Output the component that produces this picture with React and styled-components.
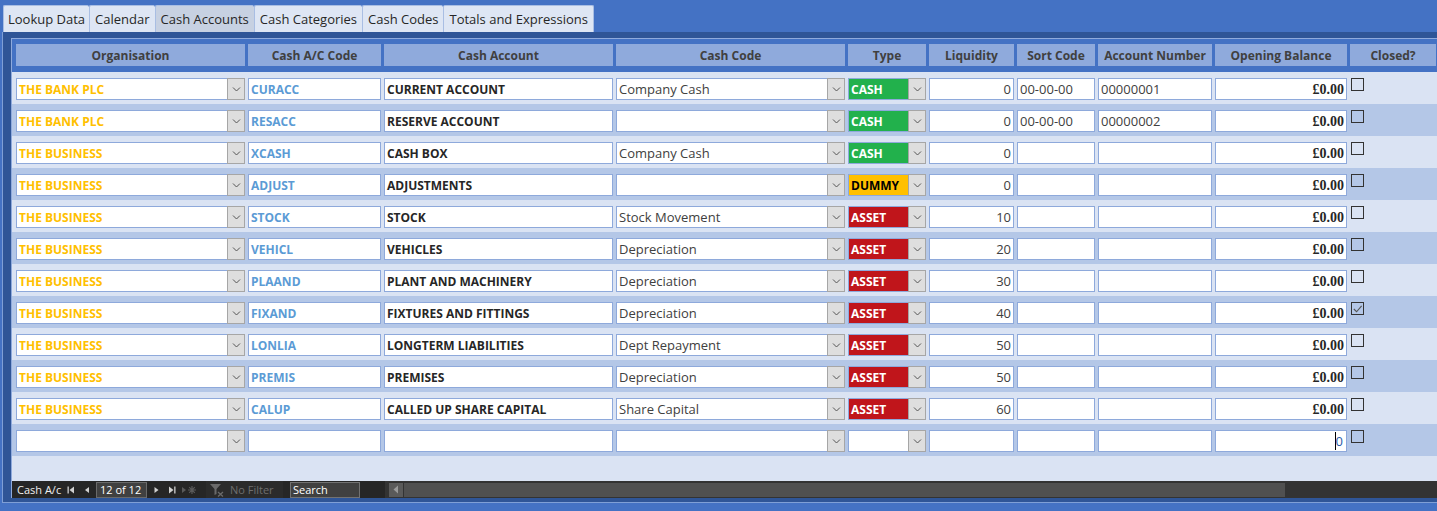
import React from "react"
import styled, { createGlobalStyle } from "styled-components"

const GlobalStyle = createGlobalStyle`
    html, body {
        margin: 0;
        padding: 0;
        background: #4472C4;
        overflow: hidden;
    }
    body {
        font-family: "Open Sans", "Liberation Sans", sans-serif;
    }
`

const COLS = "229px 133px 229px 229px 78px 85px 78px 114px 132px 86px"

const headers = [
    "Organisation", "Cash A/C Code", "Cash Account", "Cash Code", "Type",
    "Liquidity", "Sort Code", "Account Number", "Opening Balance", "Closed?",
]

const tabs = ["Lookup Data", "Calendar", "Cash Accounts", "Cash Categories", "Cash Codes", "Totals and Expressions"]

const rows = [
    { org: "THE BANK PLC", code: "CURACC", account: "CURRENT ACCOUNT", cashCode: "Company Cash", type: "CASH", liq: "0", sort: "00-00-00", num: "00000001" },
    { org: "THE BANK PLC", code: "RESACC", account: "RESERVE ACCOUNT", cashCode: "", type: "CASH", liq: "0", sort: "00-00-00", num: "00000002" },
    { org: "THE BUSINESS", code: "XCASH", account: "CASH BOX", cashCode: "Company Cash", type: "CASH", liq: "0" },
    { org: "THE BUSINESS", code: "ADJUST", account: "ADJUSTMENTS", cashCode: "", type: "DUMMY", liq: "0" },
    { org: "THE BUSINESS", code: "STOCK", account: "STOCK", cashCode: "Stock Movement", type: "ASSET", liq: "10" },
    { org: "THE BUSINESS", code: "VEHICL", account: "VEHICLES", cashCode: "Depreciation", type: "ASSET", liq: "20" },
    { org: "THE BUSINESS", code: "PLAAND", account: "PLANT AND MACHINERY", cashCode: "Depreciation", type: "ASSET", liq: "30" },
    { org: "THE BUSINESS", code: "FIXAND", account: "FIXTURES AND FITTINGS", cashCode: "Depreciation", type: "ASSET", liq: "40", closed: true },
    { org: "THE BUSINESS", code: "LONLIA", account: "LONGTERM LIABILITIES", cashCode: "Dept Repayment", type: "ASSET", liq: "50" },
    { org: "THE BUSINESS", code: "PREMIS", account: "PREMISES", cashCode: "Depreciation", type: "ASSET", liq: "50" },
    { org: "THE BUSINESS", code: "CALUP", account: "CALLED UP SHARE CAPITAL", cashCode: "Share Capital", type: "ASSET", liq: "60" },
]

const typeColours = {
    CASH: { bg: "#22B14C", fg: "#ffffff" },
    DUMMY: { bg: "#FFC000", fg: "#000000" },
    ASSET: { bg: "#C0151B", fg: "#ffffff" },
}

const Chevron = () => (
    <svg width="9" height="5" viewBox="0 0 9 5">
        <path d="M1 0.5 L4.5 4 L8 0.5" fill="none" stroke="#555" strokeWidth="1" />
    </svg>
)

const Combo = ({ children, tone }) => (
    <ComboBox>
        <ComboText tone={tone}>{children}</ComboText>
        <DropButton><Chevron /></DropButton>
    </ComboBox>
)

const TypeCombo = ({ type }) => {
    const c = typeColours[type]
    return (
        <ComboBox>
            <TypeFill style={c ? { background: c.bg, color: c.fg } : undefined}>{type}</TypeFill>
            <DropButton><Chevron /></DropButton>
        </ComboBox>
    )
}

const Check = ({ checked }) => (
    <CheckBox>
        {checked && (
            <svg width="12" height="12" viewBox="0 0 12 12">
                <path d="M2 6 L5 9 L10.5 2.5" fill="none" stroke="#555" strokeWidth="1.2" />
            </svg>
        )}
    </CheckBox>
)

const Icon = ({ d, fill = "#d0d0d0" }) => (
    <svg width="10" height="10" viewBox="0 0 10 10">
        <path d={d} fill={fill} />
    </svg>
)

export default function App() {
    return (
        <>
            <GlobalStyle />
            <TabStrip>
                {tabs.map((t) => (
                    <Tab key={t} active={t === "Cash Accounts"}>{t}</Tab>
                ))}
            </TabStrip>
            <Panel>
                <Inner>
                    <HeaderBar>
                        {headers.map((h) => (
                            <HeaderCell key={h}>{h}</HeaderCell>
                        ))}
                    </HeaderBar>
                    <Detail>
                        {rows.map((r, i) => (
                            <Row key={r.code} alt={i % 2 === 1}>
                                <Combo tone="org">{r.org}</Combo>
                                <Field tone="code">{r.code}</Field>
                                <Field tone="bold">{r.account}</Field>
                                <Combo>{r.cashCode}</Combo>
                                <TypeCombo type={r.type} />
                                <Field align="right">{r.liq}</Field>
                                <Field>{r.sort}</Field>
                                <Field>{r.num}</Field>
                                <Field align="right" tone="money">£0.00</Field>
                                <Check checked={r.closed} />
                            </Row>
                        ))}
                        <Row alt>
                            <Combo />
                            <Field />
                            <Field />
                            <Combo />
                            <TypeCombo />
                            <Field />
                            <Field />
                            <Field />
                            <Field align="right"><Caret>0</Caret></Field>
                            <Check />
                        </Row>
                    </Detail>
                    <NavBar>
                        <NavLabel>Cash A/c</NavLabel>
                        <NavBtn><Icon d="M1.5 1.5 H2.8 V8.5 H1.5 Z M8 1.5 V8.5 L3.5 5 Z" /></NavBtn>
                        <NavBtn><Icon d="M7 2 V8 L3 5 Z" /></NavBtn>
                        <RecordBox>12 of 12</RecordBox>
                        <NavBtn><Icon d="M3.5 2 V8 L7.5 5 Z" /></NavBtn>
                        <NavBtn><Icon d="M2 1.5 V8.5 L6.5 5 Z M7.2 1.5 H8.5 V8.5 H7.2 Z" /></NavBtn>
                        <NavBtn wide>
                            <svg width="16" height="10" viewBox="0 0 16 10">
                                <path d="M1 2 V8 L5 5 Z" fill="#5a5a5a" />
                                <path d="M11 1 V9 M7 5 H15 M8.2 2.2 L13.8 7.8 M13.8 2.2 L8.2 7.8" stroke="#5a5a5a" strokeWidth="1.2" />
                            </svg>
                        </NavBtn>
                        <FilterBox>
                            <svg width="16" height="14" viewBox="0 0 16 14">
                                <path d="M1 1 H12 L7.5 6 V11 L5.5 12 V6 Z" fill="#6a6a6a" />
                                <path d="M9 9 L14 13.5 M14 9 L9 13.5" stroke="#6a6a6a" strokeWidth="1.3" />
                            </svg>
                            <span>No Filter</span>
                        </FilterBox>
                        <SearchBox>Search</SearchBox>
                        <ScrollBar>
                            <ScrollArrow>
                                <svg width="6" height="9" viewBox="0 0 6 9">
                                    <path d="M5 0.5 V8.5 L0.5 4.5 Z" fill="#9a9a9a" />
                                </svg>
                            </ScrollArrow>
                            <ScrollThumb />
                        </ScrollBar>
                    </NavBar>
                </Inner>
            </Panel>
        </>
    )
}

const TabStrip = styled.div`
    display: flex;
    padding: 5px 0 0 3px;
    height: 27px;
`

const Tab = styled.div`
    box-sizing: border-box;
    height: 27px;
    padding: 0 5px 0 5px;
    display: flex;
    align-items: center;
    font-size: 13px;
    color: #262626;
    background: ${(p) => (p.active ? "#C7D1E2" : "#DEE6F4")};
    border: 1px solid #A9BEE3;
    border-bottom: none;
    border-right: none;
    border-radius: 2px 2px 0 0;
    &:first-child {
        padding-left: 4px;
        padding-right: 4px;
    }
    &:last-child {
        border-right: 1px solid #A9BEE3;
    }
`

const Panel = styled.div`
    margin-left: 2px;
    background: #2F5597;
    border-left: 1px solid #7F9FD6;
    border-bottom: 1px solid #7F9FD6;
    padding: 6px 0 4px 8px;
`

const Inner = styled.div`
    border-left: 1px solid #8FAADC;
    border-top: 1px solid #8FAADC;
    background: #DAE3F3;
`

const HeaderBar = styled.div`
    display: grid;
    grid-template-columns: ${COLS};
    column-gap: 3px;
    background: #4472C4;
    padding: 5px 0 6px 4px;
`

const HeaderCell = styled.div`
    height: 22px;
    background: #8FAADC;
    display: flex;
    align-items: center;
    justify-content: center;
    font-size: 12px;
    font-weight: 700;
    color: #404040;
    white-space: nowrap;
    overflow: hidden;
`

const Detail = styled.div`
    height: 409px;
    background: #DAE3F3;
`

const Row = styled.div`
    display: grid;
    grid-template-columns: ${COLS};
    column-gap: 3px;
    align-items: start;
    height: 32px;
    box-sizing: border-box;
    padding: 6px 0 0 4px;
    background: ${(p) => (p.alt ? "#B4C7E7" : "#DAE3F3")};
`

const toneStyles = {
    org: "color: #FFC000; font-weight: 700; font-size: 12px; line-height: 22px;",
    code: "color: #5B9BD5; font-weight: 700; font-size: 12px; line-height: 22px;",
    bold: "color: #262626; font-weight: 700; font-size: 12px; line-height: 22px;",
    money: "color: #262626; font-weight: 700; font-size: 14px; line-height: 22px; font-family: 'Liberation Serif', serif;",
}

const Field = styled.div`
    box-sizing: border-box;
    height: 22px;
    background: #ffffff;
    border: 1px solid #8EA9DB;
    padding: 0 2px;
    line-height: 20px;
    font-size: 13px;
    color: #404040;
    white-space: nowrap;
    overflow: hidden;
    text-align: ${(p) => p.align || "left"};
    ${(p) => toneStyles[p.tone] || ""}
`

const ComboBox = styled.div`
    box-sizing: border-box;
    height: 22px;
    background: #ffffff;
    border: 1px solid #8EA9DB;
    display: flex;
    overflow: visible;
`

const ComboText = styled.div`
    flex: 1;
    padding: 0 2px;
    line-height: 20px;
    height: 20px;
    font-size: 13px;
    color: #404040;
    white-space: nowrap;
    overflow: hidden;
    ${(p) => toneStyles[p.tone] || ""}
`

const TypeFill = styled.div`
    flex: 1;
    padding: 0 2px;
    line-height: 21px;
    height: 20px;
    font-size: 12px;
    font-weight: 700;
    white-space: nowrap;
    overflow: hidden;
`

const DropButton = styled.div`
    box-sizing: border-box;
    width: 18px;
    margin: -1px -1px -1px 0;
    background: #DEDEDE;
    border: 1px solid #A6A6A6;
    display: flex;
    align-items: center;
    justify-content: center;
`

const CheckBox = styled.div`
    box-sizing: border-box;
    width: 13px;
    height: 13px;
    margin: 0 0 0 1px;
    border: 1px solid #333333;
    display: flex;
    align-items: center;
    justify-content: center;
    svg {
        display: block;
    }
`

const Caret = styled.span`
    display: inline-block;
    border-left: 1px solid #000;
    line-height: 18px;
    margin-top: 1px;
    padding-right: 1px;
    color: #2A5CAA;
    font-size: 13px;
`

const NavBar = styled.div`
    display: flex;
    align-items: center;
    height: 17px;
    background: #262626;
    color: #f0f0f0;
    font-size: 11px;
    padding-left: 5px;
    overflow: hidden;
`

const NavLabel = styled.div`
    width: 46px;
    white-space: nowrap;
`

const NavBtn = styled.div`
    width: ${(p) => (p.wide ? "18px" : "16px")};
    height: 17px;
    display: flex;
    align-items: center;
    justify-content: center;
`

const RecordBox = styled.div`
    box-sizing: border-box;
    width: 51px;
    height: 16px;
    margin: 0 1px 0 1px;
    padding-left: 3px;
    background: #404040;
    border: 1px solid #6a6a6a;
    line-height: 14px;
    font-size: 11px;
    color: #ffffff;
`

const FilterBox = styled.div`
    display: flex;
    align-items: center;
    gap: 5px;
    height: 17px;
    width: 77px;
    margin-left: 8px;
    padding-left: 3px;
    box-sizing: border-box;
    background: #2B2B2B;
    color: #6E6E6E;
    white-space: nowrap;
`

const SearchBox = styled.div`
    box-sizing: border-box;
    width: 70px;
    height: 16px;
    margin-left: 7px;
    padding-left: 2px;
    background: #404040;
    border: 1px solid #727272;
    line-height: 14px;
    color: #ffffff;
`

const ScrollBar = styled.div`
    flex: 1;
    display: flex;
    align-items: center;
    height: 17px;
    margin-left: 25px;
    background: #333333;
    padding-left: 4px;
`

const ScrollArrow = styled.div`
    width: 14px;
    height: 14px;
    background: #5A5A5A;
    display: flex;
    align-items: center;
    justify-content: center;
`

const ScrollThumb = styled.div`
    width: 881px;
    height: 14px;
    margin-left: 1px;
    background: #505050;
`
